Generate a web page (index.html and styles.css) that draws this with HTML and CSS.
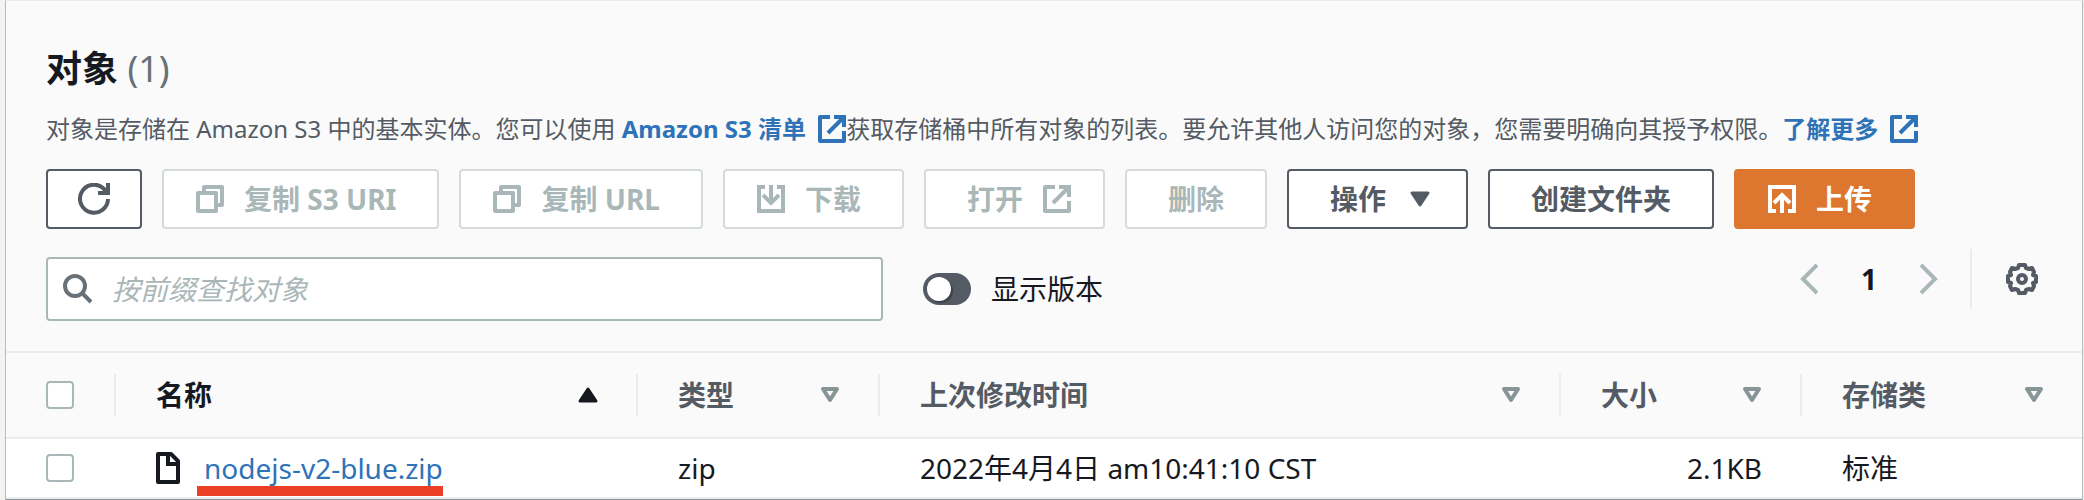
FILE: index.html
```html
<!DOCTYPE html>
<html lang="zh-CN">
<head>
<meta charset="utf-8">
<title>对象</title>
<link rel="stylesheet" href="styles.css">
</head>
<body>
<svg class="sprite" aria-hidden="true">
  <symbol id="external" viewBox="0 0 28 28"><path d="M12 2H2V26H26V16" fill="none" stroke="currentColor" stroke-width="4" stroke-linejoin="round"/><path d="M16 2H26V12M25 3L10 18" fill="none" stroke="currentColor" stroke-width="4"/></symbol>
  <symbol id="copy" viewBox="0 0 28 28"><path d="M2 8H20V26H2ZM8 8V2H26V20H20" fill="none" stroke="currentColor" stroke-width="4" stroke-linejoin="round"/></symbol>
  <symbol id="sort" viewBox="0 0 20 16"><path d="M3 2H17L10 13Z" fill="none" stroke="currentColor" stroke-width="4" stroke-linejoin="round"/></symbol>
  <symbol id="solid" viewBox="0 0 20 16"><path d="M2 2H18L10 14Z" fill="currentColor" stroke="currentColor" stroke-width="3" stroke-linejoin="round"/></symbol>
</svg>
<main class="panel">
  <header class="header">
    <h1 class="title">对象 <span class="count">(1)</span></h1>
    <p class="description">对象是存储在 Amazon S3 中的基本实体。您可以使用 <a href="#inventory">Amazon S3 清单 <svg class="icon link-icon"><use href="#external"/></svg></a>获取存储桶中所有对象的列表。要允许其他人访问您的对象，您需要明确向其授予权限。<a href="#more">了解更多 <svg class="icon link-icon"><use href="#external"/></svg></a></p>
    <div class="actions">
      <button class="button refresh" type="button" aria-label="刷新"><svg class="icon-large" viewBox="0 0 32 32"><path d="M30 16A14 14 0 1 1 25 5L29 9" fill="none" stroke="currentColor" stroke-width="4"/><path d="M30 0V10H20" fill="none" stroke="currentColor" stroke-width="4"/></svg></button>
      <button class="button icon-start" type="button" disabled><svg class="icon"><use href="#copy"/></svg>复制 S3 URI</button>
      <button class="button icon-start" type="button" disabled><svg class="icon"><use href="#copy"/></svg>复制 URL</button>
      <button class="button icon-start" type="button" disabled><svg class="icon" viewBox="0 0 28 28"><path d="M8 2H2V26H26V2H20M14 0V17M6 10L14 18L22 10" fill="none" stroke="currentColor" stroke-width="4"/></svg>下载</button>
      <button class="button icon-end" type="button" disabled>打开<svg class="icon"><use href="#external"/></svg></button>
      <button class="button" type="button" disabled>删除</button>
      <button class="button icon-end" type="button">操作<svg class="icon" viewBox="0 0 28 28"><path d="M6 8H22L14 20Z" fill="currentColor" stroke="currentColor" stroke-width="3" stroke-linejoin="round"/></svg></button>
      <button class="button" type="button">创建文件夹</button>
      <button class="button primary icon-start" type="button"><svg class="icon" viewBox="0 0 28 28"><path d="M8 26H2V2H26V26H20M14 28V11M6 18L14 10L22 18" fill="none" stroke="currentColor" stroke-width="4"/></svg>上传</button>
    </div>
    <div class="filters">
      <label class="search">
        <svg class="icon-large search-icon" viewBox="0 0 32 32"><circle cx="13" cy="13" r="10" fill="none" stroke="currentColor" stroke-width="4"/><path d="M20 20L29 29" stroke="currentColor" stroke-width="4"/></svg>
        <input class="search-input" type="text" placeholder="按前缀查找对象" aria-label="按前缀查找对象">
      </label>
      <label class="versions"><input class="toggle" type="checkbox" role="switch">显示版本</label>
      <nav class="pagination" aria-label="分页">
        <button class="plain" type="button" aria-label="上一页" disabled><svg class="chevron" viewBox="0 0 18 32"><path d="M17 2L3 16L17 30" fill="none" stroke="currentColor" stroke-width="4"/></svg></button>
        <button class="plain page" type="button">1</button>
        <button class="plain" type="button" aria-label="下一页" disabled><svg class="chevron" viewBox="0 0 18 32"><path d="M1 2L15 16L1 30" fill="none" stroke="currentColor" stroke-width="4"/></svg></button>
      </nav>
      <div class="settings">
        <button class="plain gear" type="button" aria-label="设置"><svg class="icon-large" viewBox="0 0 32 32"><path d="M13 2H19L20 5L23 6L26 5L28 9L27 12L30 13V19L27 20L28 23L26 27L23 26L20 27L19 30H13L12 27L9 26L6 27L4 23L5 20L2 19V13L5 12L4 9L6 5L9 6L12 5Z" fill="none" stroke="currentColor" stroke-width="4" stroke-linejoin="round"/><circle cx="16" cy="16" r="4" fill="none" stroke="currentColor" stroke-width="4"/></svg></button>
      </div>
    </div>
  </header>
  <table class="objects">
    <colgroup><col class="col-check"><col class="col-name"><col class="col-type"><col><col class="col-size"><col class="col-class"></colgroup>
    <thead>
      <tr>
        <th><div class="head"><input class="checkbox" type="checkbox" aria-label="全选"></div></th>
        <th><div class="head sorted">名称<svg class="sort-icon flip"><use href="#solid"/></svg></div></th>
        <th><div class="head">类型<svg class="sort-icon"><use href="#sort"/></svg></div></th>
        <th><div class="head">上次修改时间<svg class="sort-icon"><use href="#sort"/></svg></div></th>
        <th><div class="head">大小<svg class="sort-icon"><use href="#sort"/></svg></div></th>
        <th><div class="head">存储类<svg class="sort-icon"><use href="#sort"/></svg></div></th>
      </tr>
    </thead>
    <tbody>
      <tr>
        <td><input class="checkbox" type="checkbox" aria-label="选择 nodejs-v2-blue.zip"></td>
        <td><div class="file"><svg class="file-icon" viewBox="0 0 24 32"><path d="M2 2H15L22 9V30H2Z" fill="none" stroke="currentColor" stroke-width="4" stroke-linejoin="round"/><path d="M12 2V12H22" fill="none" stroke="currentColor" stroke-width="4"/></svg><a class="file-link" href="#file">nodejs-v2-blue.zip</a></div></td>
        <td>zip</td>
        <td>2022年4月4日 am10:41:10 CST</td>
        <td class="size">2.1KB</td>
        <td>标准</td>
      </tr>
    </tbody>
  </table>
</main>
</body>
</html>
```

FILE: styles.css
```css
* { box-sizing: border-box; }

body {
  margin: 0;
  padding: 0 1px 0 5px;
  background: #f2f3f3;
  color: #16191f;
  font-family: "Noto Sans", "Noto Sans CJK SC", sans-serif;
  font-size: 28px;
  line-height: 44px;
}

.sprite { position: absolute; width: 0; height: 0; }

.panel {
  border: 1px solid #b5bdbf;
  border-top-color: #eaeded;
  border-bottom-color: #879196;
  background: #fff;
}

.header {
  padding: 46px 40px 30px;
  background: #fafafa;
}

.title { margin: 0; font-size: 36px; line-height: 44px; font-weight: 700; }
.count { color: #687078; font-weight: 400; }

.description {
  margin: 20px 0 0;
  color: #545b64;
  font-size: 24px;
  line-height: 36px;
}

a { color: #2e73b8; text-decoration: none; }
.description a { font-weight: 700; }

.icon { width: 28px; height: 28px; flex: none; }
.icon-large { width: 32px; height: 32px; flex: none; }
.link-icon { margin-left: 6px; vertical-align: -5px; }

.actions { display: flex; flex-wrap: wrap; gap: 20px; margin-top: 22px; }

.button {
  display: flex;
  align-items: center;
  justify-content: center;
  gap: 20px;
  height: 60px;
  padding: 0 41px;
  border: 2px solid #545b64;
  border-radius: 4px;
  background: #fff;
  color: #545b64;
  font: inherit;
  font-weight: 700;
  white-space: nowrap;
}

.button:disabled { border-color: #d5dbdb; color: #aab7b8; }
.icon-start { padding-left: 32px; }
.icon-end { padding-right: 32px; }
.refresh { width: 96px; padding: 0; }
.primary { border-color: #dd7730; background: #dd7730; color: #fff; }

.filters { display: flex; align-items: flex-start; margin-top: 20px; }

.search {
  display: flex;
  align-items: center;
  gap: 18px;
  width: 837px;
  height: 64px;
  margin-top: 8px;
  padding: 0 14px;
  border: 2px solid #aab7b8;
  border-radius: 4px;
  background: #fff;
}

.search-icon { color: #687078; }

.search-input {
  flex: 1;
  min-width: 0;
  padding: 0;
  border: 0;
  outline: 0;
  background: transparent;
  color: #16191f;
  font: inherit;
}

.search-input::placeholder { color: #aab7b8; font-style: italic; opacity: 1; }

.versions {
  display: flex;
  align-items: center;
  gap: 20px;
  height: 64px;
  margin: 8px 0 0 40px;
}

.toggle {
  display: flex;
  align-items: center;
  appearance: none;
  width: 48px;
  height: 32px;
  margin: 0;
  padding: 4px;
  border-radius: 16px;
  background: #545b64;
}

.toggle::before {
  content: "";
  width: 24px;
  height: 24px;
  border-radius: 50%;
  background: #fff;
  box-shadow: 2px 2px 1px #3c4249;
}

.plain {
  display: flex;
  align-items: center;
  justify-content: center;
  padding: 0;
  border: 0;
  background: none;
  color: #16191f;
  font: inherit;
}

.plain:disabled { color: #aab7b8; }
.pagination { display: flex; align-items: center; height: 60px; margin: 0 32px 0 auto; }
.chevron { width: 18px; height: 32px; }
.page { width: 102px; font-weight: 700; }

.settings {
  display: flex;
  align-items: center;
  height: 60px;
  padding: 0 4px 0 34px;
  border-left: 2px solid #eaeded;
}

.gear { color: #545b64; }

.objects { width: 100%; border-collapse: separate; border-spacing: 0; table-layout: fixed; }
.col-check { width: 110px; }
.col-name { width: 522px; }
.col-type { width: 242px; }
.col-size { width: 241px; }
.col-class { width: 280px; }

th {
  height: 88px;
  padding: 0;
  border-top: 2px solid #eaeded;
  border-bottom: 2px solid #eaeded;
  background: #fafafa;
  text-align: left;
}

.head {
  display: flex;
  align-items: center;
  justify-content: space-between;
  height: 42px;
  padding: 0 38px 0 40px;
  border-right: 2px solid #eaeded;
  color: #545b64;
}

th:last-child .head { border-right: 0; }
.sorted { color: #16191f; }
.sort-icon { width: 20px; height: 16px; color: #879596; }
.flip { color: #16191f; transform: rotate(180deg); }

td { height: 60px; padding: 0 40px; border-bottom: 2px solid #eaeded; }
.size { text-align: right; }

.checkbox {
  display: block;
  appearance: none;
  width: 28px;
  height: 28px;
  margin: 0;
  border: 2px solid #aab7b8;
  border-radius: 4px;
  background: #fff;
}

.file { display: flex; align-items: center; gap: 24px; }
.file-icon { width: 24px; height: 32px; flex: none; }

.file-link { position: relative; }

/* Red marker drawn under the file name */
.file-link::after {
  content: "";
  position: absolute;
  right: 0;
  bottom: -6px;
  left: -7px;
  height: 10px;
  background: #eb3f25;
}
```
